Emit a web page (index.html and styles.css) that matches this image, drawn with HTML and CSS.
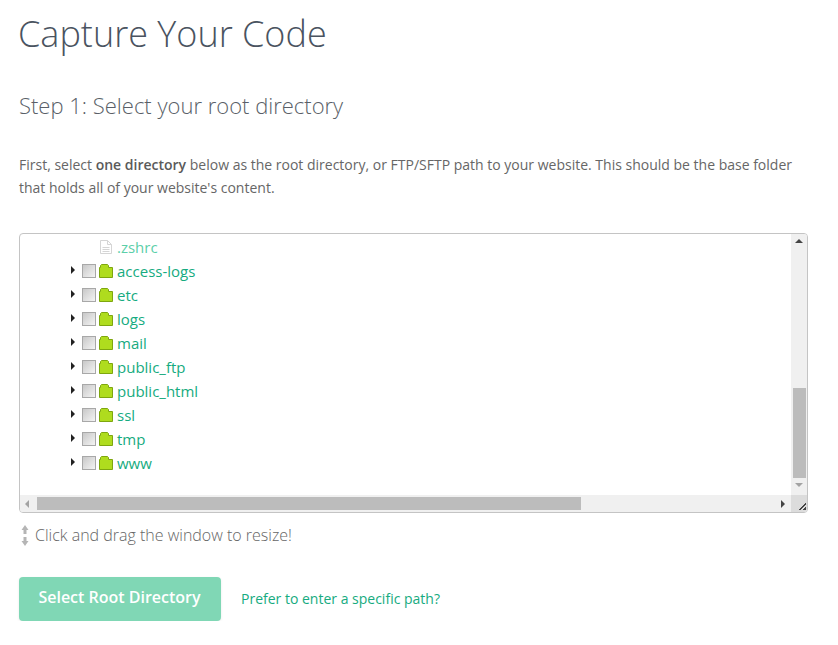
FILE: index.html
```html
<!DOCTYPE html>
<html lang="en">
<head>
<meta charset="utf-8">
<title>Capture Your Code</title>
<link rel="stylesheet" href="styles.css">
</head>
<body>
<main class="page">
  <h1 class="title">Capture Your Code</h1>
  <h2 class="step">Step 1: Select your root directory</h2>
  <p class="intro">First, select <strong>one directory</strong> below as the root directory, or FTP/SFTP path to your website. This should be the base folder that holds all of your website's content.</p>

  <section class="browser">
    <div class="browser-main">
      <ul class="tree">
        <li class="row row-file">
          <svg class="file-icon" width="12" height="14" viewBox="0 0 12 14"><path d="M.5.500h7l4 4v9H.5z" fill="#fff" stroke="#d5d5d5"/><path d="M7.500.5v4h4M2.500 7.500h7M2.500 9.500h7M2.500 11.500h7" fill="none" stroke="#d5d5d5"/></svg>
          <a class="name name-file">.zshrc</a>
        </li>
        <li class="row"><i class="caret"></i><i class="check"></i><svg class="folder" width="14" height="14" viewBox="0 0 14 14"><path d="M.5 13.500v-10h1V1.500l1-1h6l1 1v2h4v10z" fill="#afdc1e" stroke="#7ea60f"/></svg><a class="name">access-logs</a></li>
        <li class="row"><i class="caret"></i><i class="check"></i><svg class="folder" width="14" height="14" viewBox="0 0 14 14"><path d="M.5 13.500v-10h1V1.500l1-1h6l1 1v2h4v10z" fill="#afdc1e" stroke="#7ea60f"/></svg><a class="name">etc</a></li>
        <li class="row"><i class="caret"></i><i class="check"></i><svg class="folder" width="14" height="14" viewBox="0 0 14 14"><path d="M.5 13.500v-10h1V1.500l1-1h6l1 1v2h4v10z" fill="#afdc1e" stroke="#7ea60f"/></svg><a class="name">logs</a></li>
        <li class="row"><i class="caret"></i><i class="check"></i><svg class="folder" width="14" height="14" viewBox="0 0 14 14"><path d="M.5 13.500v-10h1V1.500l1-1h6l1 1v2h4v10z" fill="#afdc1e" stroke="#7ea60f"/></svg><a class="name">mail</a></li>
        <li class="row"><i class="caret"></i><i class="check"></i><svg class="folder" width="14" height="14" viewBox="0 0 14 14"><path d="M.5 13.500v-10h1V1.500l1-1h6l1 1v2h4v10z" fill="#afdc1e" stroke="#7ea60f"/></svg><a class="name">public_ftp</a></li>
        <li class="row"><i class="caret"></i><i class="check"></i><svg class="folder" width="14" height="14" viewBox="0 0 14 14"><path d="M.5 13.500v-10h1V1.500l1-1h6l1 1v2h4v10z" fill="#afdc1e" stroke="#7ea60f"/></svg><a class="name">public_html</a></li>
        <li class="row"><i class="caret"></i><i class="check"></i><svg class="folder" width="14" height="14" viewBox="0 0 14 14"><path d="M.5 13.500v-10h1V1.500l1-1h6l1 1v2h4v10z" fill="#afdc1e" stroke="#7ea60f"/></svg><a class="name">ssl</a></li>
        <li class="row"><i class="caret"></i><i class="check"></i><svg class="folder" width="14" height="14" viewBox="0 0 14 14"><path d="M.5 13.500v-10h1V1.500l1-1h6l1 1v2h4v10z" fill="#afdc1e" stroke="#7ea60f"/></svg><a class="name">tmp</a></li>
        <li class="row"><i class="caret"></i><i class="check"></i><svg class="folder" width="14" height="14" viewBox="0 0 14 14"><path d="M.5 13.500v-10h1V1.500l1-1h6l1 1v2h4v10z" fill="#afdc1e" stroke="#7ea60f"/></svg><a class="name">www</a></li>
      </ul>
      <div class="vbar">
        <i class="arrow-up"></i>
        <div class="vthumb"></div>
        <i class="arrow-down"></i>
      </div>
    </div>
    <div class="hbar">
      <i class="arrow-left"></i>
      <div class="hthumb"></div>
      <i class="arrow-right"></i>
      <div class="corner">
        <svg width="10" height="10" viewBox="0 0 10 10"><path d="M9 1v1H8v1H7v1H6v1H5v1H4v1H3v1H2v1h2V8h1V7h1V6h1V5h1V4h1z" fill="#444"/><path d="M9 5v1H8v1H7v1H6v1h3z" fill="#444"/></svg>
      </div>
    </div>
  </section>

  <p class="hint">
    <svg class="hint-icon" width="8" height="21" viewBox="0 0 8 21"><path d="M4 0l3.500 5H5.500v4h-3V5H.5zM4 21L.5 16h2v-4h3v4h2z" fill="#b5b5b5"/></svg>
    <span>Click and drag the window to resize!</span>
  </p>

  <div class="actions">
    <button class="primary" type="button">Select Root Directory</button>
    <a class="path-link">Prefer to enter a specific path?</a>
  </div>
</main>
</body>
</html>
```
FILE: styles.css
```css
* { box-sizing: border-box; }
html, body { margin: 0; padding: 0; }
body {
  background: #fff;
  font-family: "Open Sans", "Liberation Sans", sans-serif;
  color: #666;
}
.page { padding: 0 30px 0 19px; }
.title {
  margin: 0 0 0 -1px;
  padding-top: 10px;
  font-size: 36px;
  line-height: 48px;
  font-weight: 300;
  color: #4a5360;
}
.step {
  margin: 33px 0 0;
  font-size: 22px;
  line-height: 28px;
  font-weight: 300;
  color: #5a5f68;
}
.intro {
  margin: 34px 0 0;
  font-size: 14px;
  line-height: 23px;
  color: #666;
}
.intro strong { font-weight: 600; color: #5a5a5a; }

.browser {
  margin-top: 34px;
  width: 789px;
  height: 280px;
  border: 1px solid #c4c4c4;
  border-radius: 4px;
  display: flex;
  flex-direction: column;
  overflow: hidden;
}
.browser-main { flex: 1; display: flex; min-height: 0; }
.tree {
  flex: 1;
  margin: 0;
  padding: 1px 0 0 51px;
  list-style: none;
}
.row {
  height: 24px;
  display: flex;
  align-items: center;
  font-size: 15px;
}
.row-file { padding-left: 29px; }
.file-icon { margin-right: 5px; margin-top: -1px; }
.caret {
  width: 0; height: 0;
  border-left: 4px solid #222;
  border-top: 4px solid transparent;
  border-bottom: 4px solid transparent;
  margin-right: 7px;
  margin-top: -2px;
}
.check {
  width: 14px; height: 14px;
  border: 1px solid #a8a8a8;
  background: linear-gradient(135deg, #c8c8c8, #f4f4f4);
  margin-right: 3px;
  margin-top: -1px;
}
.folder { margin-right: 4px; margin-top: -1px; }
.name { color: #16ab80; }
.name-file { color: #5ccfa9; }

.vbar {
  width: 16px;
  background: #f0f0f0;
  position: relative;
  display: flex;
  flex-direction: column;
  align-items: center;
  padding-top: 5px;
}
.arrow-up {
  width: 0; height: 0;
  border-left: 4px solid transparent;
  border-right: 4px solid transparent;
  border-bottom: 4px solid #444;
}
.vthumb {
  width: 13px;
  height: 90px;
  margin-top: 145px;
  margin-left: 1px;
  background: #bcbcbc;
}
.arrow-down {
  margin-top: 5px;
  width: 0; height: 0;
  border-left: 4px solid transparent;
  border-right: 4px solid transparent;
  border-top: 4px solid #a3a3a3;
}
.hbar {
  height: 17px;
  background: #f0f0f0;
  display: flex;
  align-items: center;
  padding-left: 5px;
}
.arrow-left {
  width: 0; height: 0;
  border-top: 4px solid transparent;
  border-bottom: 4px solid transparent;
  border-right: 4px solid #a3a3a3;
  margin-right: 8px;
}
.hthumb { width: 544px; height: 13px; background: #bcbcbc; }
.arrow-right {
  width: 0; height: 0;
  border-top: 4px solid transparent;
  border-bottom: 4px solid transparent;
  border-left: 4px solid #444;
  margin-left: 200px;
}
.corner {
  margin-left: auto;
  width: 16px; height: 17px;
  background: #dcdcdc;
  display: flex;
  align-items: flex-end;
  justify-content: flex-end;
  padding: 0 0 1px 0;
}

.hint {
  margin: 11px 0 0;
  display: flex;
  align-items: center;
  font-size: 16px;
  line-height: 22px;
  font-weight: 300;
  color: #666;
}
.hint-icon { margin: 0 6px 0 2px; }

.actions {
  margin-top: 31px;
  display: flex;
  align-items: center;
}
.primary {
  width: 202px;
  height: 44px;
  border: 0;
  border-radius: 4px;
  background: #80d7b5;
  color: #fff;
  font-family: inherit;
  font-size: 16px;
  font-weight: 600;
  box-shadow: 0 1px 3px rgba(0,0,0,.08);
  padding: 0 1px 4px 0;
}
.path-link {
  margin: -2px 0 0 20px;
  font-size: 14px;
  color: #16ab80;
}
```
